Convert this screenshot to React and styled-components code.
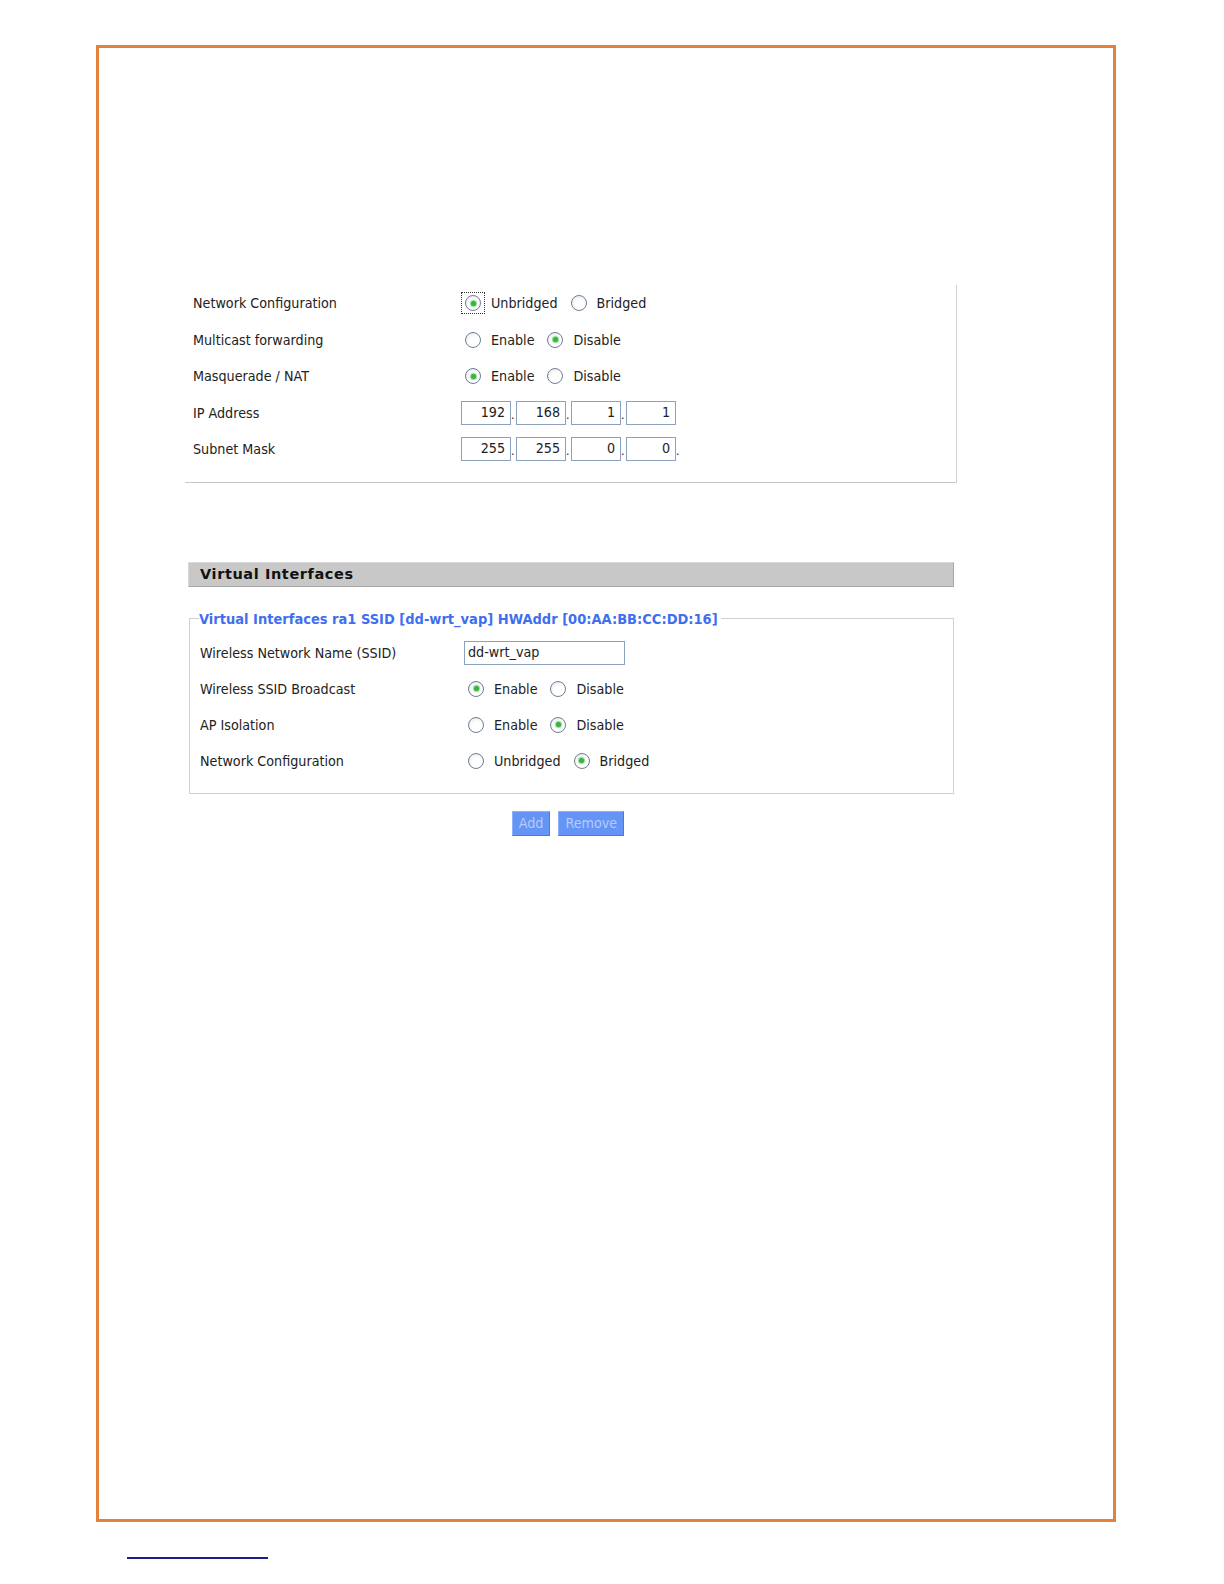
import React from "react";
import styled, { createGlobalStyle } from "styled-components";

const Global = createGlobalStyle`
  html, body { margin: 0; padding: 0; background: #fff; }
  body { font-family: "DejaVu Sans Condensed", "DejaVu Sans", sans-serif; color: #222; }
`;

const Page = styled.div`
  width: 1224px;
  height: 1584px;
  padding: 45px 0 0 96px;
  box-sizing: border-box;
`;

const Sheet = styled.div`
  width: 1020px;
  height: 1477px;
  box-sizing: border-box;
  border: 3px solid #e3823d;
  padding: 237px 0 0 86px;
`;

const Panel = styled.div`
  width: 772px;
  box-sizing: border-box;
  border-right: 1px solid #d0d0d0;
  border-bottom: 1px solid #c8c8c8;
  padding: 0 0 14px 8px;
`;

const Row = styled.div`
  display: flex;
  align-items: center;
  height: ${(p) => p.$h || 36.5}px;
  font-size: 14.2px;
`;

const Label = styled.div`
  width: ${(p) => p.$w}px;
  flex: none;
`;

const Controls = styled.div`
  display: flex;
  align-items: center;
`;

const RadioWrap = styled.span`
  width: 24px;
  height: 22px;
  display: inline-flex;
  align-items: center;
  justify-content: center;
  box-sizing: border-box;
  border: 1px dotted ${(p) => (p.$focus ? "#333" : "transparent")};
  margin-right: 6px;
`;

const Circle = styled.span`
  width: 16px;
  height: 16px;
  border-radius: 50%;
  box-sizing: border-box;
  border: 1px solid #6e7f94;
  background: radial-gradient(circle at 60% 65%, #ffffff 40%, #dfe3e8 100%);
  display: flex;
  align-items: center;
  justify-content: center;

  &::after {
    content: "";
    width: 5px;
    height: 5px;
    border-radius: 50%;
    background: ${(p) => (p.$on ? "#35b53a" : "transparent")};
    box-shadow: ${(p) => (p.$on ? "0 0 1px 1px #8fd890" : "none")};
  }
`;

const OptText = styled.span`
  margin-right: 9px;
`;

const Box = styled.span`
  display: inline-block;
  width: 50px;
  height: 24px;
  box-sizing: border-box;
  border: 1px solid #8aa2bd;
  text-align: right;
  padding: 2px 5px 0 0;
  font-size: 14.2px;
`;

const Dot = styled.span`
  width: 5px;
  display: inline-block;
  font-size: 12px;
  line-height: 24px;
  padding-top: 4px;
  box-sizing: border-box;
`;

const Section = styled.div`
  margin-top: 79px;
  margin-left: 3px;
  width: 766px;
`;

const Header = styled.div`
  height: 25px;
  box-sizing: border-box;
  background: #c8c8c8;
  border: 1px solid #a8a8a8;
  border-top-color: #d8d8d8;
  border-left-color: #d8d8d8;
  font-family: "DejaVu Sans", sans-serif;
  font-weight: bold;
  font-size: 14.5px;
  letter-spacing: 0.6px;
  color: #111;
  padding: 3px 0 0 11px;
`;

const Fieldset = styled.fieldset`
  margin: 24px 0 0 1px;
  width: 765px;
  box-sizing: border-box;
  border: 1px solid #d0d0d0;
  padding: 8px 0 14px 10px;
`;

const Legend = styled.legend`
  color: #3f6fef;
  font-weight: bold;
  font-size: 14.5px;
  padding: 0 3px 0 0;
  margin-left: -1px;
`;

const TextInput = styled.span`
  display: inline-block;
  width: 161px;
  height: 24px;
  box-sizing: border-box;
  border: 1px solid #8aa2bd;
  padding: 2px 0 0 3px;
`;

const Buttons = styled.div`
  display: flex;
  justify-content: center;
  gap: 8px;
  margin-top: 17px;
  padding-right: 6px;
`;

const Button = styled.button`
  height: 25px;
  padding: 0 ${(p) => p.$px || 5}px;
  background: #6495f6;
  color: #b5cbfb;
  border: 1px solid #4d7ad6;
  border-top-color: #8fb1f8;
  border-left-color: #8fb1f8;
  font-family: "DejaVu Sans Condensed", "DejaVu Sans", sans-serif;
  font-size: 14.2px;
`;

const FootLine = styled.div`
  margin: 35px 0 0 31px;
  width: 141px;
  height: 2px;
  background: #1c1c8e;
`;

const Radio = ({ on, focus, label }) => (
  <>
    <RadioWrap $focus={focus}>
      <Circle $on={on} />
    </RadioWrap>
    <OptText>{label}</OptText>
  </>
);

const RadioGroup = ({ options, value, focus }) => (
  <Controls>
    {options.map((o, i) => (
      <Radio key={o} label={o} on={i === value} focus={focus && i === value} />
    ))}
  </Controls>
);

const IpField = ({ parts, trailing }) => (
  <Controls>
    {parts.map((p, i) => (
      <React.Fragment key={i}>
        <Box>{p}</Box>
        {(i < parts.length - 1 || trailing) && <Dot>.</Dot>}
      </React.Fragment>
    ))}
  </Controls>
);

export default function App() {
  return (
    <Page>
      <Global />
      <Sheet>
        <Panel>
          <Row>
            <Label $w={268}>Network Configuration</Label>
            <RadioGroup options={["Unbridged", "Bridged"]} value={0} focus />
          </Row>
          <Row>
            <Label $w={268}>Multicast forwarding</Label>
            <RadioGroup options={["Enable", "Disable"]} value={1} />
          </Row>
          <Row>
            <Label $w={268}>Masquerade / NAT</Label>
            <RadioGroup options={["Enable", "Disable"]} value={0} />
          </Row>
          <Row>
            <Label $w={268}>IP Address</Label>
            <IpField parts={["192", "168", "1", "1"]} />
          </Row>
          <Row>
            <Label $w={268}>Subnet Mask</Label>
            <IpField parts={["255", "255", "0", "0"]} trailing />
          </Row>
        </Panel>

        <Section>
          <Header>Virtual Interfaces</Header>
          <Fieldset>
            <Legend>Virtual Interfaces ra1 SSID [dd-wrt_vap] HWAddr [00:AA:BB:CC:DD:16]</Legend>
            <Row $h={36}>
              <Label $w={264}>Wireless Network Name (SSID)</Label>
              <TextInput>dd-wrt_vap</TextInput>
            </Row>
            <Row $h={36}>
              <Label $w={264}>Wireless SSID Broadcast</Label>
              <RadioGroup options={["Enable", "Disable"]} value={0} />
            </Row>
            <Row $h={36}>
              <Label $w={264}>AP Isolation</Label>
              <RadioGroup options={["Enable", "Disable"]} value={1} />
            </Row>
            <Row $h={36}>
              <Label $w={264}>Network Configuration</Label>
              <RadioGroup options={["Unbridged", "Bridged"]} value={1} />
            </Row>
          </Fieldset>
          <Buttons>
            <Button $px={6}>Add</Button>
            <Button $px={6}>Remove</Button>
          </Buttons>
        </Section>
      </Sheet>
      <FootLine />
    </Page>
  );
}
